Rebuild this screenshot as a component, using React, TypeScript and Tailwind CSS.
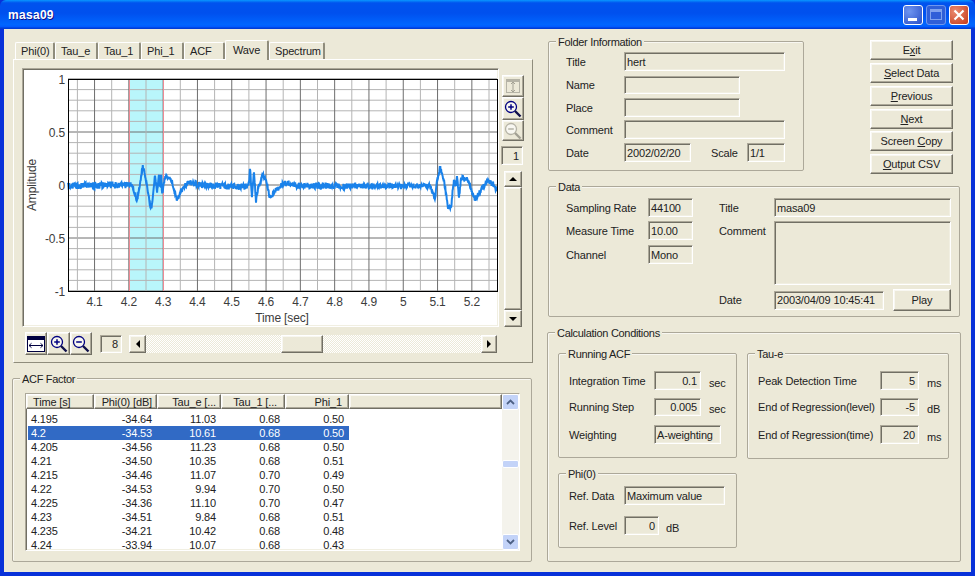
import React from 'react';

const sunken =
  'border border-t-[#aca899] border-l-[#aca899] border-r-white border-b-white shadow-[inset_1px_1px_0_#716f64,inset_-1px_-1px_0_#f1efe2]';
const raised =
  'border border-t-white border-l-white border-r-[#716f64] border-b-[#716f64] shadow-[inset_-1px_-1px_0_#aca899,inset_1px_1px_0_#f8f7f1] bg-[#ece9d8]';

// wave anchors, picked off the reference in page pixels
const anchors: [number, number, number][] = [
  [68, 185, 2.4], [128, 184, 2.4], [130, 182, 1], [133, 187, 1], [137, 200, 1], [143, 165, 1.5], [147, 185, 1],
  [151, 208, 2], [153, 196, 1], [155, 174, 1], [157, 192, 1], [159, 172, 1], [160, 190, 2], [161, 170, 1], [162, 194, 1],
  [165, 176, 1.5], [170, 176, 1.5], [173, 184, 1], [177, 199, 1.5], [181, 190, 1.5], [188, 181, 2], [200, 184, 2.4],
  [246, 186, 2.4], [249, 182, 1], [250, 167, 1], [252, 196, 1], [254, 170, 1], [256, 200, 1.5], [258, 188, 1],
  [263, 173, 1.5], [266, 180, 1], [270, 197, 1.5], [275, 190, 1.5], [285, 181, 2], [300, 185, 2.4],
  [430, 185, 1.5], [435, 199, 1.5], [437, 180, 1], [440, 166, 1.5], [444, 180, 1], [448, 206, 2], [451, 206, 2],
  [454, 178, 1.5], [456, 186, 2], [457, 174, 1], [459, 197, 1], [461, 178, 1], [463, 176, 2], [467, 178, 2],
  [471, 188, 1.5], [475, 199, 2], [481, 189, 1.5], [488, 179, 2], [493, 184, 1.5], [497, 190, 1.5],
];

function wavePoints() {
  const pts: string[] = [];
  let seed = 17;
  let a = 0;
  for (let x = 68; x <= 497; x += 0.34) {
    while (a < anchors.length - 2 && anchors[a + 1][0] <= x) a++;
    const [x0, y0, n0] = anchors[a];
    const [x1, y1, n1] = anchors[a + 1];
    const t = Math.min(1, (x - x0) / (x1 - x0));
    seed = (seed * 16807) % 2147483647;
    const r = seed / 2147483647 - 0.5;
    pts.push(`${x.toFixed(2)},${(y0 + 1 + (y1 - y0) * t + r * 2 * (n0 + (n1 - n0) * t + 0.8)).toFixed(1)}`);
  }
  return pts.join(' ');
}

const Chart = () => {
  const minorX: number[] = [];
  for (let i = 0; i < 25; i++) minorX.push(77.4 + i * 17.15);
  const minorY: number[] = [];
  for (let i = 0; i <= 20; i++) minorY.push(79 + i * 10.6);
  const ticks = ['4.1', '4.2', '4.3', '4.4', '4.5', '4.6', '4.7', '4.8', '4.9', '5', '5.1', '5.2'];
  return (
    <svg width="475" height="257" className="block" style={{ fontFamily: '"Liberation Sans", sans-serif' }}>
      <g transform="translate(-23 -69)" fontSize="12" fill="#3c3c3c">
        <rect x="129" y="79" width="34" height="212" fill="#b9f6fb" />
        {minorY.map((y, i) => (
          <line key={i} x1="68" x2="497" y1={y} y2={y} stroke={i % 5 === 0 ? '#6e6e6e' : '#b4b4b4'} />
        ))}
        {minorX.map((x, i) => (
          <line key={i} x1={x} x2={x} y1="79" y2="291" stroke={i % 2 === 0 ? '#b4b4b4' : '#6e6e6e'} />
        ))}
        <line x1="129.5" x2="129.5" y1="79" y2="291" stroke="#ee8a94" />
        <line x1="163.5" x2="163.5" y1="79" y2="291" stroke="#ee8a94" />
        <polyline points={wavePoints()} fill="none" stroke="#1a82ea" strokeWidth="2" />
        <rect x="68.5" y="79.5" width="429" height="212" fill="none" stroke="#000" />
        {[['1', 79], ['0.5', 132], ['0', 185], ['-0.5', 238], ['-1', 291]].map(([t, y]) => (
          <text key={t} x="65" y={Number(y) + 5} textAnchor="end">{t}</text>
        ))}
        {ticks.map((t, i) => (
          <text key={t} x={94.5 + i * 34.3} y="306" textAnchor="middle">{t}</text>
        ))}
        <text x="282" y="322" textAnchor="middle">Time [sec]</text>
        <text transform="translate(36 185) rotate(-90)" textAnchor="middle">Amplitude</text>
      </g>
    </svg>
  );
};

const Magnifier = ({ sign, color, handle }: { sign: 'plus' | 'minus'; color: string; handle: string }) => (
  <svg width="18" height="18" viewBox="0 0 18 18" fill="none">
    <circle cx="7" cy="7" r="5.5" stroke={color} strokeWidth="1.3" fill="#f8f7f1" />
    <path d="M4.2 7h5.6" stroke={color} strokeWidth="1.5" />
    {sign === 'plus' && <path d="M7 4.2v5.6" stroke={color} strokeWidth="1.5" />}
    <path d="M11 11l5.5 5.5" stroke={handle} strokeWidth="2.4" />
  </svg>
);

const Arrow = ({ dir }: { dir: 'up' | 'down' | 'left' | 'right' }) => {
  const d = { up: 'M4 0l4 4H0z', down: 'M4 4L0 0h8z', left: 'M0 4l4-4v8z', right: 'M4 4L0 0v8z' }[dir];
  return (
    <svg width="8" height="8" viewBox="0 0 8 8" className={dir === 'up' || dir === 'down' ? 'mt-1' : 'ml-1'}>
      <path d={d} fill="#000" />
    </svg>
  );
};

const Group = ({ title, className, children }: { title: string; className: string; children: React.ReactNode }) => (
  <div className={`relative border border-[#aca899] rounded-[2px] shadow-[inset_1px_1px_0_#f8f7f1] ${className}`}>
    <span className="absolute -top-[7px] left-[7px] bg-[#ece9d8] px-[2px] leading-[14px] whitespace-nowrap tracking-[-0.3px]">{title}</span>
    {children}
  </div>
);

const Field = ({ className, children }: { className: string; children?: React.ReactNode }) => (
  <div className={`${sunken} flex items-center px-[2px] whitespace-nowrap ${className}`}>{children}</div>
);

const Btn = ({ children, className }: { children: React.ReactNode; className: string }) => (
  <div className={`${raised} flex items-center justify-center ${className}`}>{children}</div>
);

const rows = [
  ['4.195', '-34.64', '11.03', '0.68', '0.50'],
  ['4.2', '-34.53', '10.61', '0.68', '0.50'],
  ['4.205', '-34.56', '11.23', '0.68', '0.50'],
  ['4.21', '-34.50', '10.35', '0.68', '0.51'],
  ['4.215', '-34.46', '11.07', '0.70', '0.49'],
  ['4.22', '-34.53', '9.94', '0.70', '0.50'],
  ['4.225', '-34.36', '11.10', '0.70', '0.47'],
  ['4.23', '-34.51', '9.84', '0.68', '0.51'],
  ['4.235', '-34.21', '10.42', '0.68', '0.48'],
  ['4.24', '-33.94', '10.07', '0.68', '0.43'],
];

const tabs = [
  { t: 'Phi(0)', w: 'w-[40px]' },
  { t: 'Tau_e', w: 'w-[43px]' },
  { t: 'Tau_1', w: 'w-[43px]' },
  { t: 'Phi_1', w: 'w-[43px]' },
  { t: 'ACF', w: 'w-[41px]' },
  { t: 'Wave', w: 'w-[44px]', active: true },
  { t: 'Spectrum', w: 'w-[56px]' },
];

const HeadCell = ({ className, children }: { className: string; children: React.ReactNode }) => (
  <div className={`${raised} h-[15px] flex items-center shrink-0 whitespace-nowrap ${className}`}>{children}</div>
);

const App = () => {
  return (
    <div
      className="w-[975px] h-[576px] flex flex-col overflow-hidden text-[11px] leading-[14px] tracking-[-0.15px] text-[#222] bg-[#0831d9]"
      style={{ fontFamily: '"Liberation Sans", Arial, sans-serif' }}
    >
      {/* title bar */}
      <div className="h-[29px] shrink-0 flex items-center rounded-t-[6px] pl-[8px] pr-[6px] bg-[linear-gradient(180deg,#0997ff_0,#0053ee_10%,#0050ee_45%,#0066ff_85%,#005bff_92%,#003dd7_97%,#003dd7_100%)]">
        <span className="font-bold text-[12px] text-white tracking-[0.3px] [text-shadow:1px_1px_0_#0f1089]">masa09</span>
        <div className="ml-auto flex gap-[3px]">
          <div className="w-[20px] h-[20px] rounded-[3px] border border-white bg-[radial-gradient(circle_at_30%_30%,#6f95f0,#2a50c8)] flex items-end pl-[4px] pb-[3px]">
            <div className="w-[9px] h-[3px] bg-white" />
          </div>
          <div className="w-[20px] h-[20px] rounded-[3px] border border-[#6f96ee] bg-[#2f5fd8] flex items-center justify-center">
            <div className="w-[12px] h-[11px] border border-[#7fa2ee] border-t-[3px]" />
          </div>
          <div className="w-[20px] h-[20px] rounded-[3px] border border-white bg-[radial-gradient(circle_at_30%_30%,#ea8a70,#c63a1a)] flex items-center justify-center">
            <svg width="12" height="12" viewBox="0 0 12 12">
              <path d="M1.5 1.5l9 9M10.5 1.5l-9 9" stroke="#fff" strokeWidth="2.2" />
            </svg>
          </div>
        </div>
      </div>

      {/* client area */}
      <div className="flex-1 flex mx-[4px] mb-[4px] bg-[#ece9d8] pl-[8px] min-h-0">
        {/* left column */}
        <div className="w-[521px] shrink-0 pt-[11px]">
          <div className="flex items-end h-[19px] pl-[3px] relative z-10">
            {tabs.map((tab) => (
              <div
                key={tab.t}
                className={`${tab.w} ${
                  tab.active ? 'h-[20px] -mb-px pb-[2px] pl-[7px] bg-[#ece9d8]' : 'h-[17px] pl-[5px]'
                } flex items-center border-t border-l border-r-2 border-t-white border-l-white border-r-[#8f8c7c] rounded-t-[2px] ${
                  tab.t === 'ACF' ? 'border-r-0' : ''
                }`}
              >
                {tab.t}
              </div>
            ))}
          </div>
          <div className="ml-px h-[304px] w-[520px] border border-t-white border-l-white border-r-[#8f8c7c] border-b-[#8f8c7c] pl-[8px] pt-[8px]">
            <div className="flex h-[259px]">
              <div className={`${sunken} w-[477px] h-[259px] bg-white overflow-hidden`}>
                <Chart />
              </div>
              <div className="ml-[3px] flex flex-col w-[23px]">
                <div className="mt-[7px] flex flex-col">
                  <Btn className="w-[22px] h-[22px]">
                    <svg width="16" height="16" viewBox="0 0 16 16" fill="none">
                      <rect x="1" y="1" width="14" height="3" fill="#b5b3a6" />
                      <rect x="1.5" y="1.5" width="13" height="13" stroke="#b5b3a6" />
                      <path d="M8 4v10M6 6l2-2 2 2M6 12l2 2 2-2" stroke="#a3a194" />
                    </svg>
                  </Btn>
                  <Btn className="w-[22px] h-[23px]">
                    <Magnifier sign="plus" color="#000080" handle="#10104a" />
                  </Btn>
                  <Btn className="w-[22px] h-[21px]">
                    <Magnifier sign="minus" color="#b5b3a6" handle="#a3a194" />
                  </Btn>
                </div>
                <Field className="-ml-px w-[22px] h-[19px] mt-[5px] justify-end !pr-[3px]">1</Field>
                <div className="mt-[6px] ml-[2px] w-[18px] h-[156px] flex flex-col">
                  <Btn className="h-[16px] shrink-0"><Arrow dir="up" /></Btn>
                  <div className={`${raised} flex-1`} />
                  <Btn className="h-[17px] shrink-0"><Arrow dir="down" /></Btn>
                </div>
              </div>
            </div>
            <div className="flex items-center mt-[5px] ml-[3px]">
              <Btn className="w-[22px] h-[23px]">
                <svg width="18" height="16" viewBox="0 0 18 16" fill="none">
                  <rect x="0.5" y="0.5" width="17" height="15" fill="#fff" stroke="#000040" />
                  <rect x="0" y="0" width="18" height="4" fill="#000040" />
                  <path d="M2 9.5h14M2 9.5l2.5-2.2M2 9.5l2.5 2.2M16 9.5l-2.5-2.2M16 9.5l-2.5 2.2" stroke="#000040" />
                </svg>
              </Btn>
              <Btn className="w-[23px] h-[23px]"><Magnifier sign="plus" color="#000080" handle="#10104a" /></Btn>
              <Btn className="w-[22px] h-[23px]"><Magnifier sign="minus" color="#000080" handle="#10104a" /></Btn>
              <Field className="ml-[8px] w-[22px] h-[18px] justify-end !pr-[3px]">8</Field>
              <div className="ml-[7px] w-[368px] h-[18px] flex bg-[repeating-conic-gradient(#ece9d8_0_25%,#fff_0_50%)] bg-[length:2px_2px]">
                <Btn className="w-[17px] shrink-0"><Arrow dir="left" /></Btn>
                <div className="w-[135px] shrink-0" />
                <div className={`${raised} w-[42px] shrink-0`} />
                <div className="flex-1" />
                <Btn className="w-[16px] shrink-0"><Arrow dir="right" /></Btn>
              </div>
            </div>
          </div>

          <Group title="ACF Factor" className="mt-[15px] w-[520px] h-[184px] pl-[12px] pt-[14px]">
            <div className={`${sunken} w-[495px] h-[158px] bg-white flex overflow-hidden`}>
              <div className="w-[476px] shrink-0 overflow-hidden">
                <div className="flex">
                  <HeadCell className="w-[68px] pl-[6px]">Time [s]</HeadCell>
                  <HeadCell className="w-[63px] justify-end pr-[4px]">Phi(0) [dB]</HeadCell>
                  <HeadCell className="w-[64px] justify-end pr-[4px]">Tau_e [...</HeadCell>
                  <HeadCell className="w-[64px] justify-end pr-[7px]">Tau_1 [...</HeadCell>
                  <HeadCell className="w-[64px] justify-end pr-[6px]">Phi_1</HeadCell>
                  <HeadCell className="flex-1 !shrink"> </HeadCell>
                </div>
                <div className="pt-[3px] pl-[2px]">
                  {rows.map((r, i) => (
                    <div key={r[0]} className={`flex h-[14px] w-[321px] items-center ${i === 1 ? 'bg-[#316ac5] text-white' : ''}`}>
                      <div className="w-[66px] pl-[3px]">{r[0]}</div>
                      <div className="w-[63px] pr-[5px] text-right">{r[1]}</div>
                      <div className="w-[64px] pr-[5px] text-right">{r[2]}</div>
                      <div className="w-[64px] pr-[5px] text-right">{r[3]}</div>
                      <div className="w-[64px] pr-[5px] text-right">{r[4]}</div>
                    </div>
                  ))}
                </div>
              </div>
              <div className="w-[17px] shrink-0 flex flex-col bg-[#f4f3ec]">
                <div className="h-[16px] shrink-0 rounded-[2px] bg-[#c3d3f8] border border-white flex items-center justify-center">
                  <svg width="9" height="6" viewBox="0 0 9 6" fill="none"><path d="M1 5l3.5-3.5L8 5" stroke="#4d6185" strokeWidth="1.8" /></svg>
                </div>
                <div className="h-[50px] shrink-0" />
                <div className="h-[8px] shrink-0 rounded-[2px] bg-[#c3d3f8] border border-white" />
                <div className="flex-1" />
                <div className="h-[16px] shrink-0 rounded-[2px] bg-[#c3d3f8] border border-white flex items-center justify-center">
                  <svg width="9" height="6" viewBox="0 0 9 6" fill="none"><path d="M1 1l3.5 3.5L8 1" stroke="#4d6185" strokeWidth="1.8" /></svg>
                </div>
              </div>
            </div>
          </Group>
        </div>

        {/* right column */}
        <div className="ml-[14px] w-[414px] shrink-0 pt-[12px]">
          <div className="flex pl-px h-[130px]">
            <Group title="Folder Information" className="w-[256px] h-[130px] pl-[17px] pt-[10px]">
              <div className="flex items-center">
                <span className="w-[58px]">Title</span>
                <Field className="w-[161px] h-[19px]">hert</Field>
              </div>
              <div className="flex items-center mt-[5px]">
                <span className="w-[58px]">Name</span>
                <Field className="w-[116px] h-[18px]" />
              </div>
              <div className="flex items-center mt-[4px]">
                <span className="w-[58px]">Place</span>
                <Field className="w-[116px] h-[19px]" />
              </div>
              <div className="flex items-center mt-[3px]">
                <span className="w-[58px]">Comment</span>
                <Field className="w-[161px] h-[19px]" />
              </div>
              <div className="flex items-center mt-[4px]">
                <span className="w-[58px]">Date</span>
                <Field className="w-[67px] h-[19px]">2002/02/20</Field>
                <span className="ml-[20px] w-[36px]">Scale</span>
                <Field className="w-[38px] h-[19px]">1/1</Field>
              </div>
            </Group>
            <div className="ml-[66px] -mt-[1px] flex flex-col gap-[3px] w-[83px]">
              <Btn className="h-[20px] shrink-0"><span>E<u>x</u>it</span></Btn>
              <Btn className="h-[20px] shrink-0"><span><u>S</u>elect Data</span></Btn>
              <Btn className="h-[20px] shrink-0"><span><u>P</u>revious</span></Btn>
              <Btn className="h-[20px] shrink-0"><span><u>N</u>ext</span></Btn>
              <Btn className="h-[20px] shrink-0 -mt-px"><span>Screen <u>C</u>opy</span></Btn>
              <Btn className="h-[20px] shrink-0"><span><u>O</u>utput CSV</span></Btn>
            </div>
          </div>

          <Group title="Data" className="ml-px mt-[15px] w-[412px] h-[131px] pl-[17px] pt-[11px] flex">
            <div className="w-[153px] shrink-0">
              <div className="flex items-center">
                <span className="w-[82px]">Sampling Rate</span>
                <Field className="w-[45px] h-[19px]">44100</Field>
              </div>
              <div className="flex items-center mt-[4px]">
                <span className="w-[82px]">Measure Time</span>
                <Field className="w-[45px] h-[19px]">10.00</Field>
              </div>
              <div className="flex items-center mt-[5px]">
                <span className="w-[82px]">Channel</span>
                <Field className="w-[45px] h-[19px]">Mono</Field>
              </div>
            </div>
            <div>
              <div className="flex items-center">
                <span className="w-[55px]">Title</span>
                <Field className="w-[177px] h-[19px]">masa09</Field>
              </div>
              <div className="flex mt-[4px]">
                <span className="w-[55px] pt-[3px]">Comment</span>
                <Field className="w-[177px] h-[64px]" />
              </div>
              <div className="flex items-center mt-[4px]">
                <span className="w-[55px]">Date</span>
                <Field className="w-[110px] h-[19px]">2003/04/09 10:45:41</Field>
                <Btn className="ml-[9px] w-[58px] h-[22px]">Play</Btn>
              </div>
            </div>
          </Group>

          <Group title="Calculation Conditions" className="mt-[15px] w-[414px] h-[230px] pl-[10px] pt-[20px] flex">
            <div className="w-[179px] shrink-0">
              <Group title="Running ACF" className="h-[105px] pl-[10px] pt-[17px]">
                <div className="flex items-center">
                  <span className="w-[85px]">Integration Time</span>
                  <Field className="w-[47px] h-[19px] justify-end !pr-[3px]">0.1</Field>
                  <span className="ml-[8px] self-end">sec</span>
                </div>
                <div className="flex items-center mt-[8px]">
                  <span className="w-[85px]">Running Step</span>
                  <Field className="w-[47px] h-[18px] justify-end !pr-[3px]">0.005</Field>
                  <span className="ml-[8px] self-end">sec</span>
                </div>
                <div className="flex items-center mt-[9px]">
                  <span className="w-[85px]">Weighting</span>
                  <Field className="w-[67px] h-[19px]">A-weighting</Field>
                </div>
              </Group>
              <Group title="Phi(0)" className="mt-[15px] h-[75px] pl-[10px] pt-[12px]">
                <div className="flex items-center">
                  <span className="w-[55px]">Ref. Data</span>
                  <Field className="w-[101px] h-[19px]">Maximum value</Field>
                </div>
                <div className="flex items-center mt-[11px]">
                  <span className="w-[55px]">Ref. Level</span>
                  <Field className="w-[35px] h-[19px] justify-end !pr-[3px]">0</Field>
                  <span className="ml-[7px] self-end">dB</span>
                </div>
              </Group>
            </div>
            <Group title="Tau-e" className="ml-[10px] w-[202px] h-[106px] pl-[10px] pt-[17px]">
              <div className="flex items-center">
                <span className="w-[122px] whitespace-nowrap">Peak Detection Time</span>
                <Field className="w-[39px] h-[19px] justify-end !pr-[3px]">5</Field>
                <span className="ml-[8px] self-end">ms</span>
              </div>
              <div className="flex items-center mt-[8px]">
                <span className="w-[122px] whitespace-nowrap">End of Regression(level)</span>
                <Field className="w-[39px] h-[18px] justify-end !pr-[3px]">-5</Field>
                <span className="ml-[8px] self-end">dB</span>
              </div>
              <div className="flex items-center mt-[9px]">
                <span className="w-[122px] whitespace-nowrap">End of Regression(time)</span>
                <Field className="w-[39px] h-[19px] justify-end !pr-[3px]">20</Field>
                <span className="ml-[8px] self-end">ms</span>
              </div>
            </Group>
          </Group>
        </div>
      </div>
    </div>
  );
};

export default App;
